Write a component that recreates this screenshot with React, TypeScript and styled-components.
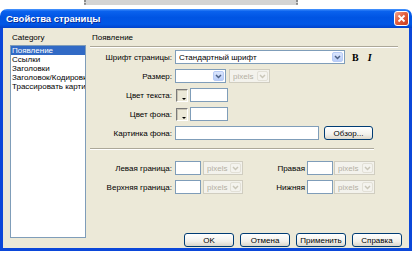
import React from "react";
import styled, { createGlobalStyle } from "styled-components";

const GlobalStyle = createGlobalStyle`
  html, body {
    margin: 0;
    padding: 0;
    background: #ffffff;
  }
  body {
    font-family: "Liberation Sans", Arial, sans-serif;
    font-size: 8px;
    color: #000000;
  }
`;

const Backdrop = styled.div`
  height: 9px;
  display: flex;
  align-items: flex-start;
  padding-left: 84px;
`;

const Ruler = styled.div`
  width: 214px;
  height: 5px;
  box-sizing: border-box;
  background: #d4d4d4;
  border-left: 2px dotted #8c8c8c;
  border-right: 2px dotted #8c8c8c;
`;

const Window = styled.div`
  width: 412px;
  display: flex;
  flex-direction: column;
`;

const TitleBar = styled.div`
  height: 19px;
  display: flex;
  align-items: center;
  justify-content: space-between;
  padding: 0 3px 0 6px;
  border-radius: 7px 7px 0 0;
  background: linear-gradient(
    to bottom,
    #4d98ff 0%,
    #0a62ee 12%,
    #0054e3 45%,
    #0157e6 80%,
    #0042cc 100%
  );
`;

const Title = styled.span`
  color: #ffffff;
  font-weight: bold;
  font-size: 9.5px;
  text-shadow: 1px 1px 0 #0b2f9a;
`;

const CloseButton = styled.div`
  width: 15px;
  height: 15px;
  box-sizing: border-box;
  border: 1px solid #ffffff;
  border-radius: 3px;
  background: linear-gradient(135deg, #f2a48e 0%, #e3603f 45%, #c83a1c 100%);
  display: flex;
  align-items: center;
  justify-content: center;
`;

const Body = styled.div`
  height: 223px;
  box-sizing: border-box;
  background: #ece9d8;
  border: 3px solid #0b47d9;
  border-top: none;
  display: flex;
  padding: 5px 0 1px 7px;
`;

const CategoryColumn = styled.div`
  width: 76px;
  display: flex;
  flex-direction: column;
`;

const Caption = styled.div`
  height: 10px;
  line-height: 10px;
  padding-left: 2px;
`;

const ListBox = styled.div`
  margin-top: 2px;
  height: 193px;
  box-sizing: border-box;
  border: 1px solid #7f9db9;
  background: #ffffff;
`;

const ListItem = styled.div<{ $selected?: boolean }>`
  height: 9px;
  line-height: 9px;
  padding-left: 1px;
  white-space: nowrap;
  overflow: hidden;
  background: ${({ $selected }) => ($selected ? "#316ac5" : "transparent")};
  color: ${({ $selected }) => ($selected ? "#ffffff" : "#000000")};
`;

const Panel = styled.div`
  flex: 1;
  margin-left: 4px;
  padding-right: 11px;
  display: flex;
  flex-direction: column;
`;

const Separator = styled.div<{ $trim?: number }>`
  height: 0;
  border-top: 1px solid #aca899;
  border-bottom: 1px solid #ffffff;
  margin-right: ${({ $trim }) => $trim ?? 0}px;
`;

const Form = styled.div<{ $top: number }>`
  margin-top: ${({ $top }) => $top}px;
  display: flex;
  flex-direction: column;
  gap: 5px;
`;

const Row = styled.div`
  height: 14px;
  display: flex;
  align-items: center;
`;

const Label = styled.span<{ $width?: number }>`
  width: ${({ $width }) => $width ?? 82}px;
  flex-shrink: 0;
  text-align: right;
  white-space: nowrap;
  margin-right: 3px;
`;

const SideLabel = styled.span`
  width: 62px;
  flex-shrink: 0;
  text-align: right;
  white-space: nowrap;
  margin-right: 2px;
`;

const Select = styled.div<{ $width: number; $disabled?: boolean; $gap?: number }>`
  width: ${({ $width }) => $width}px;
  height: 14px;
  box-sizing: border-box;
  margin-left: ${({ $gap }) => $gap ?? 0}px;
  display: flex;
  align-items: center;
  padding: 0 1px 0 3px;
  border: 1px solid ${({ $disabled }) => ($disabled ? "#d0cdc0" : "#7f9db9")};
  background: ${({ $disabled }) => ($disabled ? "#f3f2ec" : "#ffffff")};
  color: ${({ $disabled }) => ($disabled ? "#b3b0a3" : "#000000")};
`;

const SelectText = styled.span`
  flex: 1;
  overflow: hidden;
  white-space: nowrap;
`;

const DropButton = styled.span<{ $disabled?: boolean }>`
  width: 11px;
  height: 10px;
  box-sizing: border-box;
  display: flex;
  align-items: center;
  justify-content: center;
  border-radius: 2px;
  border: 1px solid ${({ $disabled }) => ($disabled ? "#e2e0d6" : "#b7cbf5")};
  background: ${({ $disabled }) =>
    $disabled ? "#f4f3ee" : "linear-gradient(to bottom, #dbe6fd, #b9cdf8)"};
`;

const StyleToggle = styled.span<{ $italic?: boolean; $gap: number }>`
  margin-left: ${({ $gap }) => $gap}px;
  font-family: "Liberation Serif", "Times New Roman", serif;
  font-size: 10px;
  font-weight: bold;
  font-style: ${({ $italic }) => ($italic ? "italic" : "normal")};
`;

const Swatch = styled.span`
  position: relative;
  width: 12px;
  height: 13px;
  box-sizing: border-box;
  margin: 0 2px 0 1px;
  border: 1px solid;
  border-color: #7a7a7a #ffffff #ffffff #7a7a7a;
  background: #ece9d8;
  box-shadow: inset 1px 1px 0 #c8c4b4;

  &::after {
    content: "";
    position: absolute;
    right: 1px;
    bottom: 1px;
    border-left: 2px solid transparent;
    border-right: 2px solid transparent;
    border-top: 2px solid #000000;
  }
`;

const TextInput = styled.span<{ $width: number; $gap?: number }>`
  width: ${({ $width }) => $width}px;
  height: 14px;
  box-sizing: border-box;
  margin-left: ${({ $gap }) => $gap ?? 0}px;
  border: 1px solid #7f9db9;
  background: #ffffff;
`;

const Button = styled.button<{ $width: number; $gap?: number }>`
  width: ${({ $width }) => $width}px;
  height: 14px;
  margin-left: ${({ $gap }) => $gap ?? 0}px;
  padding: 0;
  font: inherit;
  color: #000000;
  border: 1px solid #003c74;
  border-radius: 3px;
  background: linear-gradient(to bottom, #ffffff 0%, #f2f1ec 60%, #dcd7cb 100%);
`;

const ButtonBar = styled.div`
  margin-top: auto;
  margin-right: -4px;
  display: flex;
  justify-content: flex-end;
  gap: 6px;
`;

const Chevron = ({ disabled }: { disabled?: boolean }) => (
  <svg width="7" height="5" viewBox="0 0 7 5">
    <path
      d="M1 1 L3.5 3.5 L6 1"
      fill="none"
      stroke={disabled ? "#c9c6b8" : "#4d6185"}
      strokeWidth="1.5"
    />
  </svg>
);

const CloseGlyph = () => (
  <svg width="9" height="9" viewBox="0 0 9 9">
    <path d="M1.5 1.5 L7.5 7.5 M7.5 1.5 L1.5 7.5" stroke="#ffffff" strokeWidth="1.8" />
  </svg>
);

const categories = [
  "Появление",
  "Ссылки",
  "Заголовки",
  "Заголовок/Кодировка",
  "Трассировать картинку",
];

const MarginRow = ({ left, right }: { left: string; right: string }) => (
  <Row>
    <Label>{left}</Label>
    <TextInput $width={26} />
    <Select $width={40} $gap={2} $disabled>
      <SelectText>pixels</SelectText>
      <DropButton $disabled>
        <Chevron disabled />
      </DropButton>
    </Select>
    <SideLabel>{right}</SideLabel>
    <TextInput $width={26} />
    <Select $width={41} $gap={1} $disabled>
      <SelectText>pixels</SelectText>
      <DropButton $disabled>
        <Chevron disabled />
      </DropButton>
    </Select>
  </Row>
);

export default function App() {
  return (
    <>
      <GlobalStyle />
      <Backdrop>
        <Ruler />
      </Backdrop>
      <Window>
        <TitleBar>
          <Title>Свойства страницы</Title>
          <CloseButton>
            <CloseGlyph />
          </CloseButton>
        </TitleBar>
        <Body>
          <CategoryColumn>
            <Caption>Category</Caption>
            <ListBox>
              {categories.map((c, i) => (
                <ListItem key={c} $selected={i === 0}>
                  {c}
                </ListItem>
              ))}
            </ListBox>
          </CategoryColumn>
          <Panel>
            <Caption>Появление</Caption>
            <div style={{ marginTop: 3 }}>
              <Separator />
            </div>
            <Form $top={2}>
              <Row>
                <Label>Шрифт страницы:</Label>
                <Select $width={170}>
                  <SelectText>Стандартный шрифт</SelectText>
                  <DropButton>
                    <Chevron />
                  </DropButton>
                </Select>
                <StyleToggle $gap={7}>B</StyleToggle>
                <StyleToggle $gap={9} $italic>
                  I
                </StyleToggle>
              </Row>
              <Row>
                <Label>Размер:</Label>
                <Select $width={51}>
                  <SelectText />
                  <DropButton>
                    <Chevron />
                  </DropButton>
                </Select>
                <Select $width={41} $gap={3} $disabled>
                  <SelectText>pixels</SelectText>
                  <DropButton $disabled>
                    <Chevron disabled />
                  </DropButton>
                </Select>
              </Row>
              <Row>
                <Label>Цвет текста:</Label>
                <Swatch />
                <TextInput $width={38} />
              </Row>
              <Row>
                <Label>Цвет фона:</Label>
                <Swatch />
                <TextInput $width={38} />
              </Row>
              <Row>
                <Label>Картинка фона:</Label>
                <TextInput $width={144} />
                <Button $width={49} $gap={5}>
                  Обзор...
                </Button>
              </Row>
            </Form>
            <div style={{ marginTop: 8 }}>
              <Separator $trim={24} />
            </div>
            <Form $top={11}>
              <MarginRow left="Левая граница:" right="Правая" />
              <MarginRow left="Верхняя граница:" right="Нижняя" />
            </Form>
            <ButtonBar>
              <Button $width={50}>OK</Button>
              <Button $width={50}>Отмена</Button>
              <Button $width={50}>Применить</Button>
              <Button $width={50}>Справка</Button>
            </ButtonBar>
          </Panel>
        </Body>
      </Window>
    </>
  );
}
